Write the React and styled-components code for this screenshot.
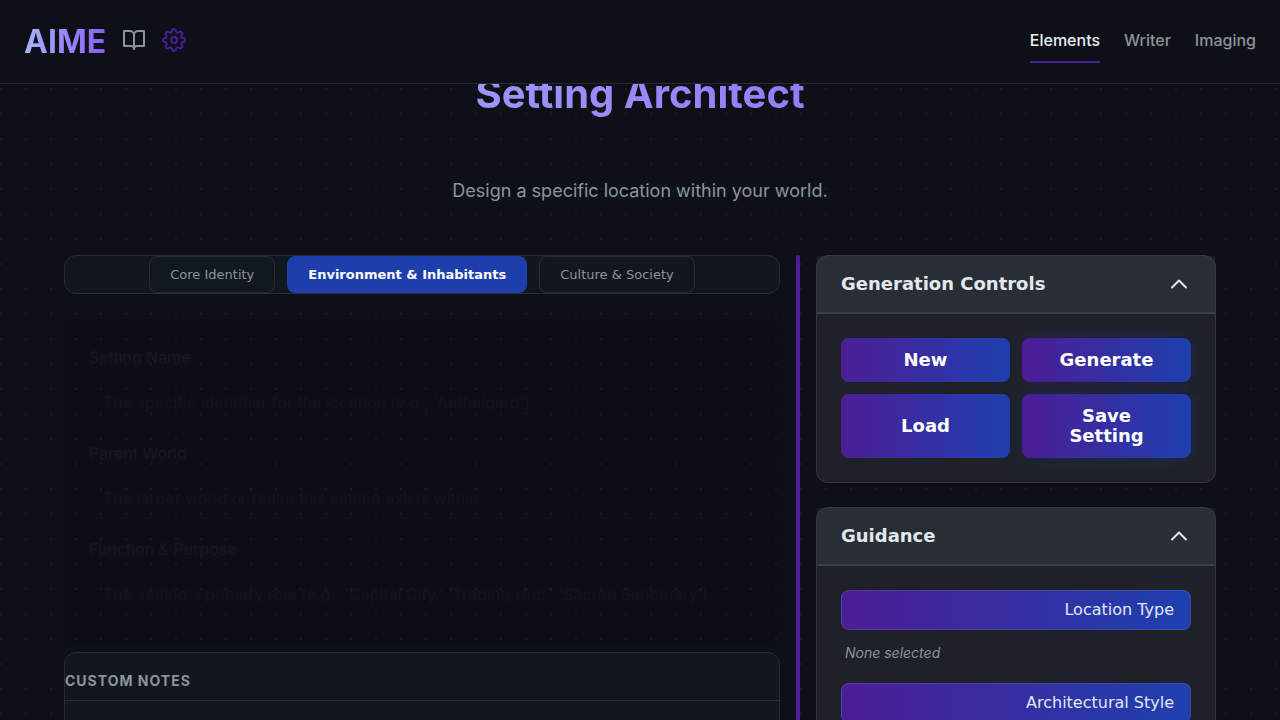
import React, { useState } from "react";
import styled, { createGlobalStyle, css } from "styled-components";

const inter = `Inter, "Liberation Sans", sans-serif`;
const dejavu = `"DejaVu Sans", sans-serif`;
const accent = "linear-gradient(90deg, #4c1d95, #1e40af)";

const GlobalStyle = createGlobalStyle`
  *, *::before, *::after { box-sizing: border-box; }
  html { scrollbar-width: none; }
  body {
    margin: 0;
    color: #e2e8f0;
    font-family: ${inter};
    font-size: 16px;
    line-height: 24px;
    background-color: #0d1117;
    background-image: radial-gradient(circle at 1px 1px, #181c22 1px, transparent 0);
    background-size: 25px 25px;
    background-position: 0 13px;
  }
`;

const gradientText = css`
  color: transparent;
  background: linear-gradient(90deg, #a5b4fc, #8b5cf6);
  background-clip: text;
  -webkit-background-clip: text;
`;

const TopBar = styled.header`
  position: fixed;
  inset: 0 0 auto;
  z-index: 10;
  display: flex;
  align-items: center;
  justify-content: space-between;
  height: 84px;
  padding: 0 24px 2px;
  background: #0d1117;
  border-bottom: 1px solid #272b31;
`;

const Brand = styled.div`
  display: flex;
  align-items: center;
  gap: 16px;
`;

const Logo = styled.a`
  ${gradientText}
  padding-top: 2px;
  font-size: 32px;
  line-height: 40px;
  font-weight: 700;
  text-decoration: none;
`;

const IconButton = styled.button`
  display: flex;
  padding: 0 0 2px;
  border: 0;
  background: none;
  color: ${(p) => (p.$active ? "#4c1d95" : "#8b949e")};
`;

const Nav = styled.nav`
  display: flex;
  gap: 24px;
`;

const NavLink = styled.a`
  padding: 8px 0;
  border-bottom: 2px solid ${(p) => (p.$active ? "#4c1d95" : "transparent")};
  color: ${(p) => (p.$active ? "#e6edf3" : "#8b949e")};
  font-weight: 500;
  line-height: 26px;
  text-decoration: none;
`;

const Page = styled.main`
  padding: 64px 64px 32px;
`;

const Title = styled.h1`
  ${gradientText}
  margin: 0 0 50px;
  font-size: 40px;
  line-height: 60px;
  font-weight: 700;
  text-align: center;
`;

const Subtitle = styled.p`
  margin: 0 0 48px;
  color: #8b949e;
  font-size: 18px;
  line-height: 33px;
  text-align: center;
`;

const Columns = styled.div`
  display: grid;
  grid-template-columns: minmax(0, 1fr) 4px 400px;
  gap: 16px;
`;

const Divider = styled.div`
  border-radius: 2px;
  background: #4c1d95;
`;

const surface = css`
  border: 1px solid #2a2d35;
  border-radius: 12px;
  background: #12161d;
`;

const Tabs = styled.div`
  ${surface}
  display: flex;
  justify-content: center;
  gap: 12px;
`;

const Tab = styled.button`
  height: 37px;
  padding: 0 20px;
  border: 1px solid ${(p) => (p.$active ? "#1e40af" : "#272b33")};
  border-radius: 8px;
  background: ${(p) => (p.$active ? "#1d3eab" : p.$tinted ? "#111820" : "transparent")};
  color: ${(p) => (p.$active ? "#ffffff" : "#8b949e")};
  font: ${(p) => (p.$active ? 700 : 400)} 13px ${dejavu};
`;

const FieldPanel = styled.section`
  display: flex;
  flex-direction: column;
  gap: 16px;
  margin: 24px 0 6px;
  padding: 23px 24px;
  border: 1px solid #30363d;
  border-radius: 12px;
  background: #000008;
  opacity: 0.03;
`;

const Field = styled.label`
  display: flex;
  flex-direction: column;
  gap: 10px;
  line-height: 30px;
`;

const fieldBox = css`
  width: 100%;
  padding: 8px 13px;
  border: 1px solid #30363d;
  border-radius: 8px;
  background: transparent;
  color: #e6edf3;
  font: 16px/22px ${inter};
  &::placeholder { color: #8b949e; opacity: 1; }
`;

const TextInput = styled.input`
  ${fieldBox}
  height: 40px;
`;

const TextBox = styled.textarea`
  ${fieldBox}
  height: 48px;
  resize: none;
`;

const Notes = styled.section`
  ${surface}
  min-height: 160px;
`;

const NotesTitle = styled.h2`
  margin: 0;
  padding: 16px 0 7px;
  border-bottom: 1px solid #272b33;
  color: #8b949e;
  font-size: 14px;
  line-height: 24px;
  font-weight: 700;
  letter-spacing: 1px;
  text-transform: uppercase;
`;

const Sidebar = styled.aside`
  display: flex;
  flex-direction: column;
  gap: 24px;
`;

const Card = styled.section`
  border: 1px solid #343941;
  border-radius: 12px;
  background: #1e2228;
`;

const CardHeader = styled.button`
  display: flex;
  align-items: center;
  justify-content: space-between;
  width: 100%;
  padding: 16px 24px;
  border: 0;
  border-bottom: 2px solid #3a3e46;
  background: rgba(220, 230, 255, 0.06);
  color: #e2e8f0;
  font: 700 18px/24px ${dejavu};
`;

const CardBody = styled.div`
  padding: 24px;
`;

const Actions = styled.div`
  display: grid;
  grid-template-columns: 1fr 1fr;
  gap: 12px;
`;

const glows = {
  purple: "0 0 15px rgba(76, 29, 149, 0.3)",
  blue: "0 0 15px rgba(30, 64, 175, 0.3)",
};

const ActionButton = styled.button`
  min-height: 44px;
  padding: 12px 24px;
  border: 0;
  border-radius: 8px;
  background: ${accent};
  box-shadow: ${(p) => glows[p.$glow] || "none"};
  color: #ffffff;
  font: 700 18px/20px ${dejavu};
`;

const Guide = styled.div`
  margin-bottom: 19px;
`;

const GuideButton = styled.button`
  display: block;
  width: 100%;
  height: 40px;
  padding: 0 16px 1px;
  border: 1px solid rgba(255, 255, 255, 0.1);
  border-radius: 8px;
  background: ${accent};
  color: #e2e8f0;
  font: 16px ${dejavu};
  text-align: right;
`;

const Selection = styled.p`
  margin: 12px 4px 0;
  color: #8b949e;
  font-size: 14px;
  line-height: 22px;
  font-style: italic;
`;

function Icon({ children }) {
  return (
    <svg width="24" height="24" viewBox="0 0 24 24" fill="none" stroke="currentColor" strokeWidth="2" strokeLinecap="round" strokeLinejoin="round" aria-hidden="true">
      {children}
    </svg>
  );
}

function CollapsibleCard({ title, children }) {
  const [open, setOpen] = useState(true);
  return (
    <Card>
      <CardHeader type="button" aria-expanded={open} onClick={() => setOpen(!open)}>
        {title}
        <Icon><path d="m5 15.5 7-7 7 7" /></Icon>
      </CardHeader>
      {open && <CardBody>{children}</CardBody>}
    </Card>
  );
}

export default function App() {
  const [tab, setTab] = useState("Environment & Inhabitants");
  return (
    <>
      <GlobalStyle />
      <TopBar>
        <Brand>
          <Logo href="#">AIME</Logo>
          <IconButton type="button" aria-label="Library">
            <Icon>
              <path d="M2 3h6a4 4 0 0 1 4 4v14a3 3 0 0 0-3-3H2z" />
              <path d="M22 3h-6a4 4 0 0 0-4 4v14a3 3 0 0 1 3-3h7z" />
            </Icon>
          </IconButton>
          <IconButton type="button" aria-label="Settings" $active>
            <Icon>
              <circle cx="12" cy="12" r="3" />
              <path d="M19.4 15a1.65 1.65 0 0 0 .33 1.82l.06.06a2 2 0 0 1 0 2.83 2 2 0 0 1-2.83 0l-.06-.06a1.65 1.65 0 0 0-1.82-.33 1.65 1.65 0 0 0-1 1.51V21a2 2 0 0 1-2 2 2 2 0 0 1-2-2v-.09A1.65 1.65 0 0 0 9 19.4a1.65 1.65 0 0 0-1.82.33l-.06.06a2 2 0 0 1-2.83 0 2 2 0 0 1 0-2.83l.06-.06a1.65 1.65 0 0 0 .33-1.82 1.65 1.65 0 0 0-1.51-1H3a2 2 0 0 1-2-2 2 2 0 0 1 2-2h.09A1.65 1.65 0 0 0 4.6 9a1.65 1.65 0 0 0-.33-1.82l-.06-.06a2 2 0 0 1 0-2.83 2 2 0 0 1 2.83 0l.06.06a1.65 1.65 0 0 0 1.82.33H9a1.65 1.65 0 0 0 1-1.51V3a2 2 0 0 1 2-2 2 2 0 0 1 2 2v.09a1.65 1.65 0 0 0 1 1.51 1.65 1.65 0 0 0 1.82-.33l.06-.06a2 2 0 0 1 2.83 0 2 2 0 0 1 0 2.83l-.06.06a1.65 1.65 0 0 0-.33 1.82V9a1.65 1.65 0 0 0 1.51 1H21a2 2 0 0 1 2 2 2 2 0 0 1-2 2h-.09a1.65 1.65 0 0 0-1.51 1z" />
            </Icon>
          </IconButton>
        </Brand>
        <Nav>
          <NavLink href="#elements" $active>Elements</NavLink>
          <NavLink href="#writer">Writer</NavLink>
          <NavLink href="#imaging">Imaging</NavLink>
        </Nav>
      </TopBar>
      <Page>
        <Title>Setting Architect</Title>
        <Subtitle>Design a specific location within your world.</Subtitle>
        <Columns>
          <div>
            <Tabs>
              {["Core Identity", "Environment & Inhabitants", "Culture & Society"].map((name, i) => (
                <Tab key={name} type="button" $active={tab === name} $tinted={i === 0} onClick={() => setTab(name)}>{name}</Tab>
              ))}
            </Tabs>
            <FieldPanel>
              <Field>Setting Name<TextInput placeholder="The specific identifier for the location (e.g., 'Aethelgard')." /></Field>
              <Field>Parent World<TextInput placeholder="The larger world or realm this setting exists within." /></Field>
              <Field>Function &amp; Purpose<TextBox placeholder="The setting's primary role (e.g., 'Capital City,' 'Trading Hub,' 'Sacred Sanctuary')." /></Field>
            </FieldPanel>
            <Notes>
              <NotesTitle>Custom Notes</NotesTitle>
            </Notes>
          </div>
          <Divider />
          <Sidebar>
            <CollapsibleCard title="Generation Controls">
              <Actions>
                <ActionButton type="button">New</ActionButton>
                <ActionButton type="button" $glow="purple">Generate</ActionButton>
                <ActionButton type="button">Load</ActionButton>
                <ActionButton type="button" $glow="blue">Save Setting</ActionButton>
              </Actions>
            </CollapsibleCard>
            <CollapsibleCard title="Guidance">
              <Guide>
                <GuideButton type="button">Location Type</GuideButton>
                <Selection>None selected</Selection>
              </Guide>
              <Guide>
                <GuideButton type="button">Architectural Style</GuideButton>
              </Guide>
            </CollapsibleCard>
          </Sidebar>
        </Columns>
      </Page>
    </>
  );
}
